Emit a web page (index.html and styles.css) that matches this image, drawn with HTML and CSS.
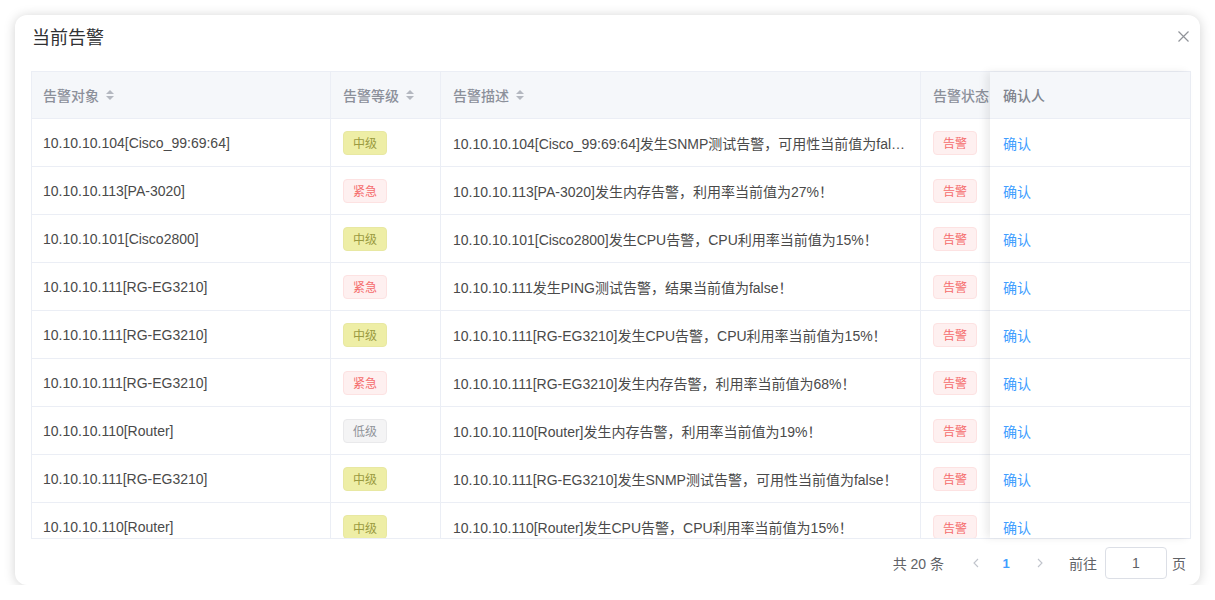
FILE: index.html
```html
<!DOCTYPE html>
<html lang="zh-CN">
<head>
<meta charset="utf-8">
<title>当前告警</title>
<link rel="stylesheet" href="styles.css">
</head>
<body>
<div class="dialog">
  <div class="dialog-header">
    <span class="title">当前告警</span>
    <svg class="close" width="11" height="11" viewBox="0 0 11 11"><path d="M0.5 0.5 L10.5 10.5 M10.5 0.5 L0.5 10.5" stroke="#909399" stroke-width="1.2" fill="none"/></svg>
  </div>
  <div class="table">
    <div class="main">
      <div class="row head">
        <div class="cell c1">告警对象 <svg class="sort" width="10" height="12" viewBox="0 0 10 12"><path d="M5 1 L9 5 H1 Z M5 11 L9 7 H1 Z" fill="#b4b8c0"/></svg></div>
        <div class="cell c2">告警等级 <svg class="sort" width="10" height="12" viewBox="0 0 10 12"><path d="M5 1 L9 5 H1 Z M5 11 L9 7 H1 Z" fill="#b4b8c0"/></svg></div>
        <div class="cell c3">告警描述 <svg class="sort" width="10" height="12" viewBox="0 0 10 12"><path d="M5 1 L9 5 H1 Z M5 11 L9 7 H1 Z" fill="#b4b8c0"/></svg></div>
        <div class="cell c4">告警状态</div>
      </div>
      <div class="body">
        <div class="row"><div class="cell c1">10.10.10.104[Cisco_99:69:64]</div><div class="cell c2"><span class="tag mid">中级</span></div><div class="cell c3"><span class="ell">10.10.10.104[Cisco_99:69:64]发生SNMP测试告警，可用性当前值为false！</span></div><div class="cell c4"><span class="tag red">告警</span></div></div>
        <div class="row"><div class="cell c1">10.10.10.113[PA-3020]</div><div class="cell c2"><span class="tag red">紧急</span></div><div class="cell c3"><span class="ell">10.10.10.113[PA-3020]发生内存告警，利用率当前值为27%！</span></div><div class="cell c4"><span class="tag red">告警</span></div></div>
        <div class="row"><div class="cell c1">10.10.10.101[Cisco2800]</div><div class="cell c2"><span class="tag mid">中级</span></div><div class="cell c3"><span class="ell">10.10.10.101[Cisco2800]发生CPU告警，CPU利用率当前值为15%！</span></div><div class="cell c4"><span class="tag red">告警</span></div></div>
        <div class="row"><div class="cell c1">10.10.10.111[RG-EG3210]</div><div class="cell c2"><span class="tag red">紧急</span></div><div class="cell c3"><span class="ell">10.10.10.111发生PING测试告警，结果当前值为false！</span></div><div class="cell c4"><span class="tag red">告警</span></div></div>
        <div class="row"><div class="cell c1">10.10.10.111[RG-EG3210]</div><div class="cell c2"><span class="tag mid">中级</span></div><div class="cell c3"><span class="ell">10.10.10.111[RG-EG3210]发生CPU告警，CPU利用率当前值为15%！</span></div><div class="cell c4"><span class="tag red">告警</span></div></div>
        <div class="row"><div class="cell c1">10.10.10.111[RG-EG3210]</div><div class="cell c2"><span class="tag red">紧急</span></div><div class="cell c3"><span class="ell">10.10.10.111[RG-EG3210]发生内存告警，利用率当前值为68%！</span></div><div class="cell c4"><span class="tag red">告警</span></div></div>
        <div class="row"><div class="cell c1">10.10.10.110[Router]</div><div class="cell c2"><span class="tag low">低级</span></div><div class="cell c3"><span class="ell">10.10.10.110[Router]发生内存告警，利用率当前值为19%！</span></div><div class="cell c4"><span class="tag red">告警</span></div></div>
        <div class="row"><div class="cell c1">10.10.10.111[RG-EG3210]</div><div class="cell c2"><span class="tag mid">中级</span></div><div class="cell c3"><span class="ell">10.10.10.111[RG-EG3210]发生SNMP测试告警，可用性当前值为false！</span></div><div class="cell c4"><span class="tag red">告警</span></div></div>
        <div class="row"><div class="cell c1">10.10.10.110[Router]</div><div class="cell c2"><span class="tag mid">中级</span></div><div class="cell c3"><span class="ell">10.10.10.110[Router]发生CPU告警，CPU利用率当前值为15%！</span></div><div class="cell c4"><span class="tag red">告警</span></div></div>
      </div>
    </div>
    <div class="fixed">
      <div class="row head"><div class="cell cf">确认人</div></div>
      <div class="body">
        <div class="row"><div class="cell cf"><a class="link">确认</a></div></div>
        <div class="row"><div class="cell cf"><a class="link">确认</a></div></div>
        <div class="row"><div class="cell cf"><a class="link">确认</a></div></div>
        <div class="row"><div class="cell cf"><a class="link">确认</a></div></div>
        <div class="row"><div class="cell cf"><a class="link">确认</a></div></div>
        <div class="row"><div class="cell cf"><a class="link">确认</a></div></div>
        <div class="row"><div class="cell cf"><a class="link">确认</a></div></div>
        <div class="row"><div class="cell cf"><a class="link">确认</a></div></div>
        <div class="row"><div class="cell cf"><a class="link">确认</a></div></div>
      </div>
    </div>
  </div>
  <div class="pager">
    <span class="total">共 20 条</span>
    <span class="arrow prev"><svg width="6" height="10" viewBox="0 0 6 10"><path d="M5 1 L1 5 L5 9" stroke="#c0c4cc" stroke-width="1.1" fill="none"/></svg></span>
    <span class="page">1</span>
    <span class="arrow next"><svg width="6" height="10" viewBox="0 0 6 10"><path d="M1 1 L5 5 L1 9" stroke="#c0c4cc" stroke-width="1.1" fill="none"/></svg></span>
    <span class="goto">前往</span>
    <span class="input">1</span>
    <span class="unit">页</span>
  </div>
</div>
</body>
</html>
```

FILE: styles.css
```css
* { box-sizing: border-box; }
html, body { margin: 0; padding: 0; }
body {
  background: #ffffff;
  font-family: "Liberation Sans", "Noto Sans CJK SC", sans-serif;
  font-size: 14px;
  color: #4a4a4a;
}
.dialog {
  margin: 15px 0 0 15px;
  width: 1185px;
  height: 570px;
  background: #fff;
  border-radius: 12px;
  box-shadow: 0 1px 12px rgba(0, 0, 0, 0.18);
  padding: 0 9px 0 16px;
  display: flex;
  flex-direction: column;
}
.dialog-header {
  height: 56px;
  display: flex;
  align-items: flex-start;
  justify-content: space-between;
  padding: 11px 2px 0 1px;
}
.title {
  font-size: 18px;
  line-height: 24px;
  color: #303133;
}
.close { margin-top: 5px; }
.table {
  display: flex;
  border: 1px solid #ebeef5;
  width: 1160px;
}
.main { width: 959px; overflow: hidden; }
.fixed {
  width: 200px;
  flex: none;
  box-shadow: -4px 0 8px rgba(0, 0, 0, 0.08);
  position: relative;
  background: #fff;
}
.body { height: 419px; overflow: hidden; }
.row {
  display: flex;
  height: 48px;
  border-bottom: 1px solid #ebeef5;
  white-space: nowrap;
}
.row.head {
  height: 47px;
  background: #f5f7fa;
  color: #8c909a;
  font-weight: 500;
}
.body .row:last-child { border-bottom: none; }
.cell {
  display: flex;
  align-items: center;
  padding: 0 12px 0 12px;
  border-right: 1px solid #ebeef5;
  flex: none;
  overflow: hidden;
}
.c1 { width: 299px; padding-left: 11px; }
.c2 { width: 110px; }
.c3 { width: 480px; }
.c4 { width: 120px; border-right: none; }
.cf { width: 199px; border-right: none; padding-left: 13px; }
.row.head .cf { color: #80848e; }
.sort { margin-left: 6px; }
.ell {
  display: block;
  overflow: hidden;
  text-overflow: ellipsis;
  white-space: nowrap;
  max-width: 456px;
}
.tag {
  display: inline-flex;
  align-items: center;
  justify-content: center;
  height: 24px;
  width: 44px;
  border-radius: 4px;
  font-size: 12px;
  border: 1px solid transparent;
}
.tag.mid { background: #eeeea6; border-color: #e8e8a2; color: #9a9a40; }
.tag.red { background: #fef0f0; border-color: #fde2e2; color: #f56c6c; }
.tag.low { background: #f4f4f5; border-color: #e9e9eb; color: #909399; }
.link { color: #409eff; }
.pager {
  display: flex;
  justify-content: flex-end;
  align-items: center;
  margin-top: 8px;
  height: 32px;
  font-size: 14px;
  color: #606266;
  padding-right: 5px;
}
.total { margin-right: 20px; }
.arrow { display: flex; justify-content: center; align-items: center; height: 32px; }
.arrow.prev { width: 24px; }
.arrow.next { width: 32px; }
.page { color: #409eff; font-weight: bold; width: 36px; text-align: center; font-size: 13px; }
.goto { margin-left: 13px; margin-right: 8px; }
.input {
  width: 62px;
  height: 32px;
  border: 1px solid #dcdfe6;
  border-radius: 4px;
  display: flex;
  align-items: center;
  justify-content: center;
}
.unit { margin-left: 5px; }
```
